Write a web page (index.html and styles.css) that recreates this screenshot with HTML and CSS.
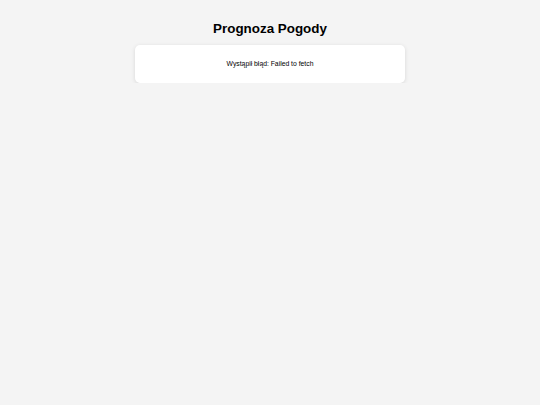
FILE: index.html
```html
<!DOCTYPE html>
<html lang="pl">
<head>
<meta charset="utf-8">
<title>Prognoza Pogody</title>
<link rel="stylesheet" href="styles.css">
</head>
<body>
<div class="container">
  <h1 class="title">Prognoza Pogody</h1>
  <div class="card">
    <p class="message">Wystąpił błąd: Failed to fetch</p>
  </div>
</div>
</body>
</html>
```
FILE: styles.css
```css
html, body {
  margin: 0;
  padding: 0;
  background: #f4f4f4;
  font-family: "Liberation Sans", Arial, sans-serif;
  color: #000;
}
.container {
  width: 270px;
  margin: 0 auto;
  padding-top: 21px;
}
.title {
  margin: 0 0 8px;
  font-size: 13.4px;
  line-height: 16px;
  text-align: center;
  font-weight: bold;
}
.card {
  background: #fff;
  border-radius: 5px;
  box-shadow: 0 1px 4px rgba(0,0,0,0.12);
  padding: 15px 10px;
  text-align: center;
}
.message {
  margin: 0;
  font-size: 6.8px;
  line-height: 8px;
}
```
